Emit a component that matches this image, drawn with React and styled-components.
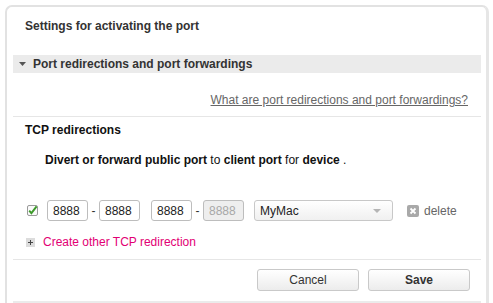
import React from "react";
import styled, { createGlobalStyle } from "styled-components";

const Global = createGlobalStyle`
  html, body { margin: 0; padding: 0; background: #fff; }
  body { font-family: "Liberation Sans", Arial, sans-serif; font-size: 12px; color: #333; }
  * { box-sizing: border-box; }
`;

const Panel = styled.div`
  margin: 5px 0 0 5px;
  width: 484px;
  height: 298px;
  overflow: hidden;
  border: 2px solid #e2e2e2;
  border-right: 3px solid #e6e6e6;
  border-bottom: none;
  border-radius: 7px 7px 0 0;
  padding: 0 5px 0 6px;
  display: flex;
  flex-direction: column;
`;

const Title = styled.div`
  font-weight: bold;
  line-height: 14px;
  padding: 12px 0 0 12px;
  margin-bottom: 22px;
  color: #333;
`;

const SectionBar = styled.div`
  height: 18px;
  flex-shrink: 0;
  background: #ebebeb;
  display: flex;
  align-items: center;
  padding-left: 6px;
  gap: 7px;
  font-weight: bold;
  color: #333;
`;

const HelpRow = styled.div`
  display: flex;
  justify-content: flex-end;
  padding-right: 13px;
  margin-top: 20px;
  line-height: 14px;
`;

const HelpLink = styled.a`
  color: #666;
  text-decoration: underline;
  cursor: pointer;
`;

const Divider = styled.div`
  height: 1px;
  flex-shrink: 0;
  background: #e6e6e6;
  margin-top: ${(p) => p.$top}px;
`;

const SubHeading = styled.div`
  font-weight: bold;
  color: #111;
  line-height: 14px;
  margin-top: 6px;
  padding-left: 12px;
`;

const Description = styled.div`
  color: #111;
  line-height: 14px;
  margin-top: 16px;
  padding-left: 32px;
  b { font-weight: bold; }
`;

const RuleRow = styled.div`
  display: flex;
  align-items: center;
  flex-shrink: 0;
  margin-top: 33px;
  padding-left: 14px;
  height: 21px;
`;

const Check = styled.span`
  display: inline-flex;
  width: 11px;
  height: 11px;
  margin-right: 9px;
`;

const PortInput = styled.input`
  width: 41px;
  height: 21px;
  border: 1px solid #bdbdbd;
  border-radius: 3px;
  background: ${(p) => (p.disabled ? "#eeeeee" : "#fff")};
  color: ${(p) => (p.disabled ? "#a8a8a8" : "#222")};
  font-family: "Liberation Sans", Arial, sans-serif;
  font-size: 12px;
  padding: 0 0 0 5px;
  margin: 0;
  margin-right: ${(p) => p.$gap || 0}px;
  outline: none;
`;

const Dash = styled.span`
  width: 11px;
  text-align: center;
  color: #333;
`;

const Select = styled.div`
  width: 139px;
  height: 21px;
  border: 1px solid #c8c8c8;
  border-radius: 3px;
  background: linear-gradient(#ffffff, #f0f0f0);
  display: flex;
  align-items: center;
  justify-content: space-between;
  padding: 0 11px 0 5px;
  color: #222;
  margin-right: 14px;
`;

const Caret = styled.span`
  width: 0;
  height: 0;
  border-left: 4px solid transparent;
  border-right: 4px solid transparent;
  border-top: 4px solid #b5b5b5;
`;

const DeleteBtn = styled.span`
  display: inline-flex;
  align-items: center;
  gap: 5px;
  color: #666;
`;

const AddRow = styled.div`
  display: flex;
  align-items: center;
  gap: 8px;
  margin-top: 14px;
  padding-left: 13px;
  line-height: 14px;
`;

const PlusBox = styled.span`
  display: inline-flex;
  width: 9px;
  height: 9px;
`;

const AddLink = styled.a`
  color: #e20074;
  cursor: pointer;
  font-size: 12px;
`;

const ButtonRow = styled.div`
  display: flex;
  justify-content: flex-end;
  gap: 9px;
  padding-right: 11px;
  margin-top: 9px;
`;

const Button = styled.button`
  width: 102px;
  height: 22px;
  border: 1px solid #c9c9c9;
  border-radius: 3px;
  background: linear-gradient(#ffffff, #ececec);
  font-family: "Liberation Sans", Arial, sans-serif;
  font-size: 12px;
  font-weight: ${(p) => (p.$primary ? "bold" : "normal")};
  color: #333;
  padding: 0;
`;

const BottomBar = styled.div`
  height: 10px;
  flex-shrink: 0;
  background: #ebebeb;
  margin-top: 10px;
`;

export default function App() {
  return (
    <>
      <Global />
      <Panel>
        <Title>Settings for activating the port</Title>
        <SectionBar>
          <svg width="7" height="4" viewBox="0 0 7 4">
            <path d="M0 0H7L3.5 4Z" fill="#555" />
          </svg>
          Port redirections and port forwardings
        </SectionBar>
        <HelpRow>
          <HelpLink>What are port redirections and port forwardings?</HelpLink>
        </HelpRow>
        <Divider $top={9} />
        <SubHeading>TCP redirections</SubHeading>
        <Description>
          <b>Divert or forward public port</b> to <b>client port</b> for <b>device</b> .
        </Description>
        <RuleRow>
          <Check>
            <svg width="11" height="11" viewBox="0 0 11 11">
              <rect x="0.5" y="0.5" width="10" height="10" rx="1.5" fill="#fafafa" stroke="#9a9a9a" />
              <path d="M2.2 5.6L4.4 8.2L9.6 1.4" fill="none" stroke="#3c9a2a" strokeWidth="1.9" />
            </svg>
          </Check>
          <PortInput defaultValue="8888" />
          <Dash>-</Dash>
          <PortInput defaultValue="8888" $gap={11} />
          <PortInput defaultValue="8888" />
          <Dash>-</Dash>
          <PortInput defaultValue="8888" disabled $gap={10} />
          <Select>
            <span>MyMac</span>
            <Caret />
          </Select>
          <DeleteBtn>
            <svg width="12" height="12" viewBox="0 0 12 12">
              <rect width="12" height="12" rx="2" fill="#a9a9a9" />
              <path d="M3.5 3.5L8.5 8.5M8.5 3.5L3.5 8.5" stroke="#fff" strokeWidth="1.8" />
            </svg>
            delete
          </DeleteBtn>
        </RuleRow>
        <AddRow>
          <PlusBox>
            <svg width="9" height="9" viewBox="0 0 9 9">
              <rect width="9" height="9" fill="#dcdcdc" />
              <path d="M2 4.5H7M4.5 2V7" stroke="#444" strokeWidth="1" />
            </svg>
          </PlusBox>
          <AddLink>Create other TCP redirection</AddLink>
        </AddRow>
        <Divider $top={10} />
        <ButtonRow>
          <Button>Cancel</Button>
          <Button $primary>Save</Button>
        </ButtonRow>
        <BottomBar />
      </Panel>
    </>
  );
}
